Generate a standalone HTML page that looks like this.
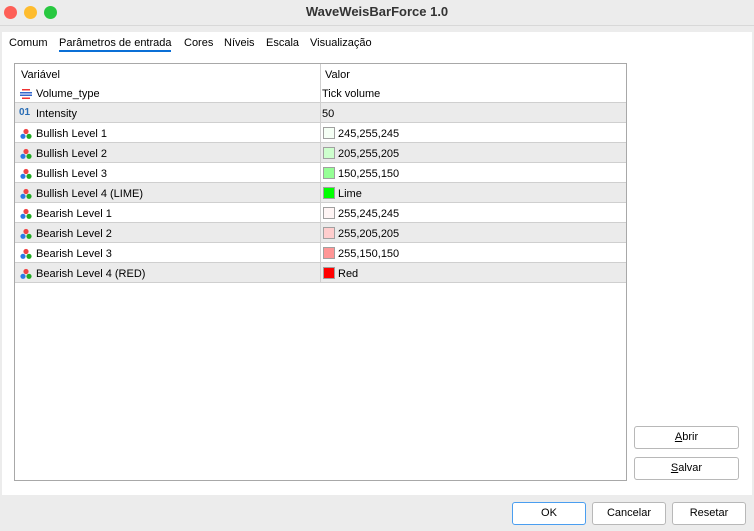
<!DOCTYPE html>
<html><head><meta charset="utf-8"><style>
*{margin:0;padding:0;box-sizing:border-box}
body{width:754px;height:531px;background:#ececec;font-family:"Liberation Sans",sans-serif;font-size:11px;color:#000;position:relative;overflow:hidden}
.title{position:absolute;top:0;left:0;width:754px;height:26px;text-align:center;line-height:24px;font-weight:bold;font-size:13px;color:#333;border-bottom:1px solid #d8d8d8}
.dot{position:absolute;top:6px;width:13px;height:13px;border-radius:50%}
.panel{position:absolute;left:2px;top:32px;width:750px;height:463px;background:#fff}
.tabs{position:absolute;left:9px;top:37px;font-size:11px}
.tabs span{position:absolute;white-space:nowrap}
.ul{position:absolute;left:59px;top:50px;width:112px;height:2px;background:#0a6fd6}
.table{position:absolute;left:14px;top:63px;width:613px;height:418px;border:1px solid #a8a8a8;background:#fff}
.row{position:absolute;left:0;width:611px;height:20px;border-bottom:1px solid #cfcfcf;line-height:22px}
.row.g{background:#ebebeb}
.c1{position:absolute;left:21px}
.c2{position:absolute;left:307px}
.div{position:absolute;left:305px;top:0;width:1px;height:219px;background:#cfcfcf}
.sw{position:absolute;left:308px;top:4px;width:12px;height:12px;border:1px solid #a0a0a0}
.sw+span{position:absolute;left:323px}
.ic{position:absolute;left:5px;top:5px;width:12px;height:12px}
.btn{position:absolute;background:#fff;border:1px solid #b8b8b8;border-radius:3px;text-align:center;font-size:11px}
</style></head><body>
<div class="title">WaveWeisBarForce 1.0</div>
<div class="dot" style="left:4px;background:#fe5f57"></div>
<div class="dot" style="left:24px;background:#febc2e"></div>
<div class="dot" style="left:44px;background:#28c840"></div>
<div class="panel"></div>
<div class="tabs">
<span style="left:0">Comum</span>
<span style="left:50px">Parâmetros de entrada</span>
<span style="left:175px">Cores</span>
<span style="left:215px">Níveis</span>
<span style="left:257px">Escala</span>
<span style="left:301px">Visualização</span>
</div>
<div class="ul"></div>
<div class="table">
<div class="row" style="top:0;border:none"><span class="c1" style="left:6px">Variável</span><span class="c2" style="left:310px">Valor</span></div>
<div class="row" style="top:19px"><svg class="ic" viewBox="0 0 12 12"><rect x="2" y="1" width="8" height="1.5" fill="#e33"/><rect x="0" y="4" width="12" height="1.5" fill="#36c"/><rect x="0" y="6.5" width="12" height="1.5" fill="#36c"/><rect x="2" y="9.5" width="8" height="1.5" fill="#e33"/></svg><span class="c1">Volume_type</span><span class="c2">Tick volume</span></div>
<div class="row g" style="top:39px"><span style="position:absolute;color:#2a6db5;font-size:10px;font-weight:bold;top:4px;left:4px;line-height:12px">01</span><span class="c1">Intensity</span><span class="c2">50</span></div>
<div id="rows"></div>
<div class="div"></div>
</div>
<script>
var d=[["Bullish Level 1","rgb(245,255,245)","245,255,245"],["Bullish Level 2","rgb(205,255,205)","205,255,205"],["Bullish Level 3","rgb(150,255,150)","150,255,150"],["Bullish Level 4 (LIME)","#00ff00","Lime"],["Bearish Level 1","rgb(255,245,245)","255,245,245"],["Bearish Level 2","rgb(255,205,205)","255,205,205"],["Bearish Level 3","rgb(255,150,150)","255,150,150"],["Bearish Level 4 (RED)","#ff0000","Red"]];
var h="";d.forEach(function(r,i){h+='<div class="row'+(i%2?' g':'')+'" style="top:'+(59+i*20)+'px"><svg class="ic" viewBox="0 0 12 12"><circle cx="6" cy="3.5" r="2.6" fill="#e44"/><circle cx="3" cy="8.3" r="2.6" fill="#2c7be5"/><circle cx="9" cy="8.3" r="2.6" fill="#2a2"/></svg><span class="c1">'+r[0]+'</span><span class="sw" style="background:'+r[1]+'"></span><span>'+r[2]+'</span></div>'});
document.getElementById("rows").outerHTML=h;
</script>
<div class="btn" style="left:634px;top:426px;width:105px;height:23px;line-height:21px"><u>A</u>brir</div>
<div class="btn" style="left:634px;top:457px;width:105px;height:23px;line-height:21px"><u>S</u>alvar</div>
<div class="btn" style="left:512px;top:502px;width:74px;height:23px;line-height:21px;border-color:#4a9ef0">OK</div>
<div class="btn" style="left:592px;top:502px;width:74px;height:23px;line-height:21px">Cancelar</div>
<div class="btn" style="left:672px;top:502px;width:74px;height:23px;line-height:21px">Resetar</div>
</body></html>
